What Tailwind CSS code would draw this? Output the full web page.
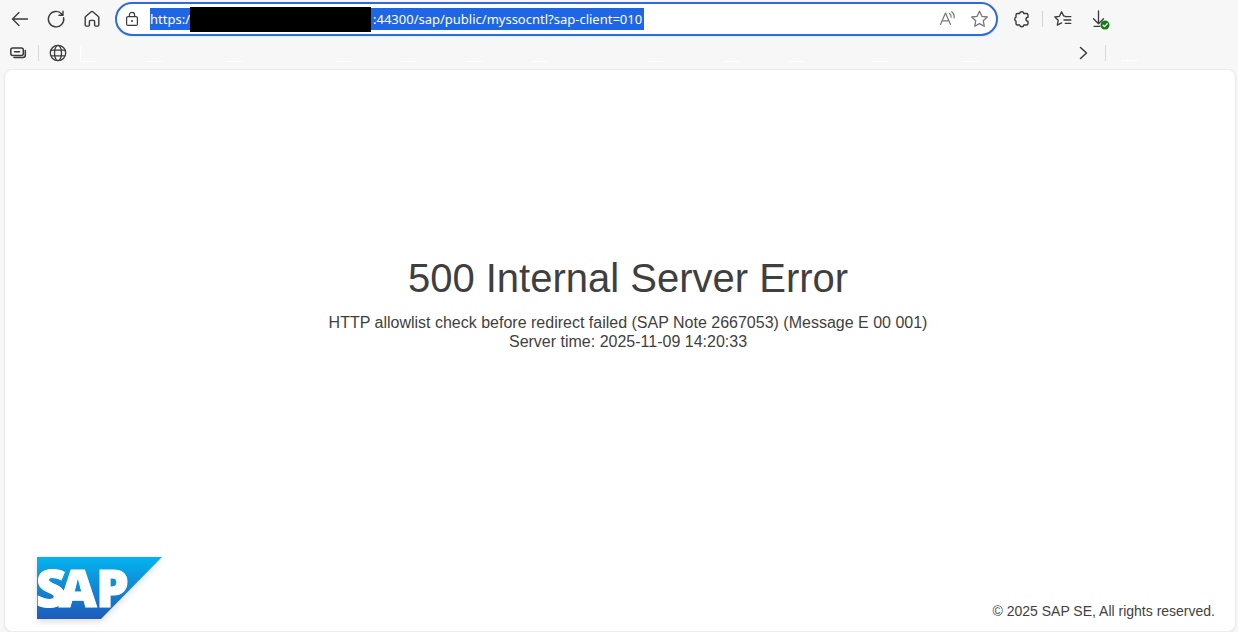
<!doctype html>
<html lang="en">

<head>
    <meta charset="UTF-8">
    <meta name="viewport" content="width=device-width, initial-scale=1.0">
    <script src="https://cdn.jsdelivr.net/npm/@tailwindcss/browser@4"></script>
    <title>500 Internal Server Error</title>
</head>

<body class="bg-[#f7f7f7] text-[#3f3f3f] font-['Liberation_Sans',Arial,sans-serif] min-h-screen flex flex-col">
    <!-- Toolbar -->
    <header class="text-[#3a3a3a]">
        <div class="flex items-center h-[38px] pl-2.5">
            <nav class="flex items-center gap-4">
                <button aria-label="Back">
                    <svg class="size-5" viewBox="0 0 20 20" fill="none" stroke="currentColor" stroke-width="1.3" stroke-linecap="round" stroke-linejoin="round">
                        <path d="M17.5 10H2.5M9 3.5 2.5 10 9 16.5" />
                    </svg>
                </button>
                <button aria-label="Refresh">
                    <svg class="size-5" viewBox="0 0 20 20" fill="none" stroke="currentColor" stroke-width="1.4" stroke-linecap="round" stroke-linejoin="round">
                        <path d="M17.6 8.6A7.7 7.7 0 1 1 15.8 5L17 6.2M17 2.2v4h-4" />
                    </svg>
                </button>
                <button aria-label="Home">
                    <svg class="size-5" viewBox="0 0 20 20" fill="none" stroke="currentColor" stroke-width="1.4" stroke-linejoin="round">
                        <path d="M3.2 8.6c0-.6.2-1 .7-1.4L9.2 2.7c.5-.4 1.1-.4 1.6 0l5.3 4.5c.5.4.7.8.7 1.4v7.4c0 .7-.4 1.1-1.1 1.1h-2c-.7 0-1.1-.4-1.1-1.1v-3.500c0-.7-.4-1.1-1.1-1.1h-3c-.7 0-1.1.4-1.1 1.1V16c0 .7-.4 1.1-1.1 1.1h-2c-.7 0-1.1-.4-1.1-1.1z" />
                    </svg>
                </button>
            </nav>

            <!-- Address bar -->
            <form class="flex flex-1 items-center h-[34px] ml-[13px] px-1.5 bg-white border-2 border-[#2f6bd8] rounded-full shadow-[0_1px_1px_#dcecff]">
                <svg class="size-4 ml-px shrink-0" viewBox="0 0 16 16" fill="none" stroke="currentColor" stroke-width="1.2">
                    <rect x="2.6" y="5.6" width="10.8" height="8.8" rx="1.5" />
                    <path d="M5.4 5.4V4a2.6 2.6 0 0 1 5.2 0v1.4" />
                    <circle cx="8" cy="10" r="1" fill="currentColor" stroke="none" />
                </svg>
                <label for="address" class="flex items-center ml-2.5 text-white text-[13px] font-['Noto_Sans',sans-serif]">
                    <span class="h-[22px] leading-[22px] bg-[#1f66e5]">https:/</span>
                    <span class="w-[181px] h-[25px] bg-black"></span>
                </label>
                <input id="address" type="text" value=":44300/sap/public/myssocntl?sap-client=010" class="field-sizing-content h-[22px] px-0.5 bg-[#1f66e5] text-white text-[13px] font-['Noto_Sans',sans-serif] outline-none">
                <div class="flex items-center gap-3 ml-auto text-[#777]">
                    <button type="button" aria-label="Read aloud">
                        <svg class="size-5" viewBox="0 0 20 20" fill="none" stroke="currentColor" stroke-width="1.2" stroke-linecap="round" stroke-linejoin="round">
                            <path d="M2.500 15.500 7.500 4l5 11.500M4.200 11.800h6.600M11.500 4.500c1.200.9 1.700 2.100 1.600 3.700M13.600 2.800c2.200 1.600 2.900 3.700 2.500 6.200" />
                        </svg>
                    </button>
                    <button type="button" aria-label="Add to favorites">
                        <svg class="size-5" viewBox="0 0 20 20" fill="none" stroke="currentColor" stroke-width="1.3" stroke-linejoin="round">
                            <path d="m9.500 2.300 2.400 5 5.400.7-4 3.800 1 5.500-4.800-2.700-4.800 2.700 1-5.500-4-3.800 5.400-.7z" />
                        </svg>
                    </button>
                </div>
            </form>

            <div class="flex items-center ml-3.5 mr-[126px]">
                <button aria-label="Extensions">
                    <svg class="size-5" viewBox="0 0 20 20" fill="none" stroke="currentColor" stroke-width="1.4" stroke-linejoin="round">
                        <path d="M5.500 4.500h2.100a2.200 2.200 0 0 1 4.300 0h2.600q1.500 0 1.500 1.500v2.200a2 2 0 0 0 0 4v2.300q0 1.500-1.500 1.500h-2.600a2.200 2.200 0 0 1-4.300 0H5.500Q4 16 4 14.500v-2.300a2.200 2.200 0 0 1 0-4V6q0-1.500 1.500-1.500" />
                    </svg>
                </button>
                <span class="w-px h-4 ml-2.5 bg-[#d2d2d2]"></span>
                <button aria-label="Favorites" class="ml-2.5">
                    <svg class="size-5" viewBox="0 0 20 20" fill="none" stroke="currentColor" stroke-width="1.3" stroke-linecap="round" stroke-linejoin="round">
                        <path d="M12.500 7.300 10.600 6.900 8.600 2.800 6.400 7.300 1.800 8l3.400 3.300-.9 4.800 4.300-2.200M12.300 7.700h5.500M11 11h6.800M12.300 14.300h5.500" />
                    </svg>
                </button>
                <button aria-label="Downloads" class="ml-[15px]">
                    <svg class="size-6" viewBox="0 0 24 24" fill="none" stroke="currentColor" stroke-width="1.3" stroke-linecap="round" stroke-linejoin="round">
                        <path d="M10.500 4v12.500M5.500 11.800l5 4.900 5-4.900M6 19.300h6" />
                        <circle cx="17" cy="18" r="4.500" fill="#107c10" stroke="none" />
                        <path d="m15 18.200 1.500 1.400 2.700-2.900" stroke="#fff" />
                    </svg>
                </button>
            </div>
        </div>

        <!-- Favorites bar -->
        <div class="flex items-center h-[31px] pl-2 pb-px">
            <button aria-label="Tab groups">
                <svg class="size-5" viewBox="0 0 20 20" fill="none" stroke="currentColor" stroke-width="1.5" stroke-linecap="round">
                    <rect x="2.800" y="5" width="12.500" height="7.500" rx="2" />
                    <path d="M6.500 8.800h5M17.300 7.500v4.500q0 2.500-2.500 2.500H6" />
                </svg>
            </button>
            <span class="w-px h-4 ml-2.5 bg-[#d8d8d8]"></span>
            <button aria-label="Website" class="ml-[9px]">
                <svg class="size-5" viewBox="0 0 20 20" fill="none" stroke="currentColor" stroke-width="1.3">
                    <circle cx="10" cy="10" r="7.700" />
                    <ellipse cx="10" cy="10" rx="3.500" ry="7.700" />
                    <path d="M3 7.200h14M3 12.800h14" />
                </svg>
            </button>
            <ul class="flex ml-3 pt-px">
                <li class="w-[66px]"><span class="block w-4 h-4 border-l border-b border-white"></span></li>
                <li class="w-[80px]"><span class="block w-4 h-4 border-b border-white"></span></li>
                <li class="w-[109px]"><span class="block w-4 h-4 border-b border-white"></span></li>
                <li class="w-[66px]"><span class="block w-4 h-4 border-b border-white"></span></li>
                <li class="w-[65px]"><span class="block w-4 h-4 border-b border-white"></span></li>
                <li class="w-[65px]"><span class="block w-4 h-4 border-b border-white"></span></li>
                <li class="w-[116px]"><span class="block w-4 h-4 border-b border-white"></span></li>
                <li class="w-[76px]"><span class="block w-4 h-4 border-b border-white"></span></li>
                <li class="w-[66px]"><span class="block w-4 h-4 border-b border-white"></span></li>
                <li class="w-[83px]"><span class="block w-4 h-4 border-b border-white"></span></li>
                <li class="w-[90px]"><span class="block w-4 h-4 border-b border-white"></span></li>
                <li><span class="block w-4 h-4 border-b border-white"></span></li>
            </ul>
            <button aria-label="More favorites" class="ml-auto mr-3">
                <svg class="size-5" viewBox="0 0 20 20" fill="none" stroke="currentColor" stroke-width="1.5" stroke-linecap="round" stroke-linejoin="round">
                    <path d="m7.500 4.500 6 5.500-6 5.500" />
                </svg>
            </button>
            <span class="w-px h-4 bg-[#d8d8d8]"></span>
            <span class="w-4 h-4 ml-4 mr-[100px] border-b border-white"></span>
        </div>
    </header>

    <!-- Error page -->
    <main class="flex flex-1 flex-col ml-1 mr-[2px] bg-white border border-[#ececec] rounded-lg shadow-xs">
        <section class="flex flex-1 flex-col justify-center items-center pb-[22px] pl-4 text-center">
            <h1 class="text-[40px] leading-[46px]">500 Internal Server Error</h1>
            <p class="mt-3 text-[16px] leading-[19px]">HTTP allowlist check before redirect failed (SAP Note 2667053) (Message E 00 001)</p>
            <p class="text-[16px] leading-[19px]">Server time: 2025-11-09 14:20:33</p>
        </section>
        <footer class="flex justify-between items-end pl-8 pr-5 pb-3">
            <svg class="w-[125px] h-[62px] drop-shadow-md" viewBox="0 0 125 62" role="img" aria-label="SAP">
                <defs>
                    <linearGradient id="sapBlue" x1="0" y1="0" x2="0" y2="1">
                        <stop offset="0" stop-color="#04b4ee" />
                        <stop offset="1" stop-color="#1f5bbb" />
                    </linearGradient>
                </defs>
                <path d="M0 0h125L64 62H0z" fill="url(#sapBlue)" />
                <text x="-1 22 59" y="50" fill="#fff" stroke="#fff" stroke-width="1" font-family="Open Sans, sans-serif" font-weight="800" font-size="52">SAP</text>
            </svg>
            <p class="text-[14px] leading-4">© 2025 SAP SE, All rights reserved.</p>
        </footer>
    </main>
</body>

</html>
